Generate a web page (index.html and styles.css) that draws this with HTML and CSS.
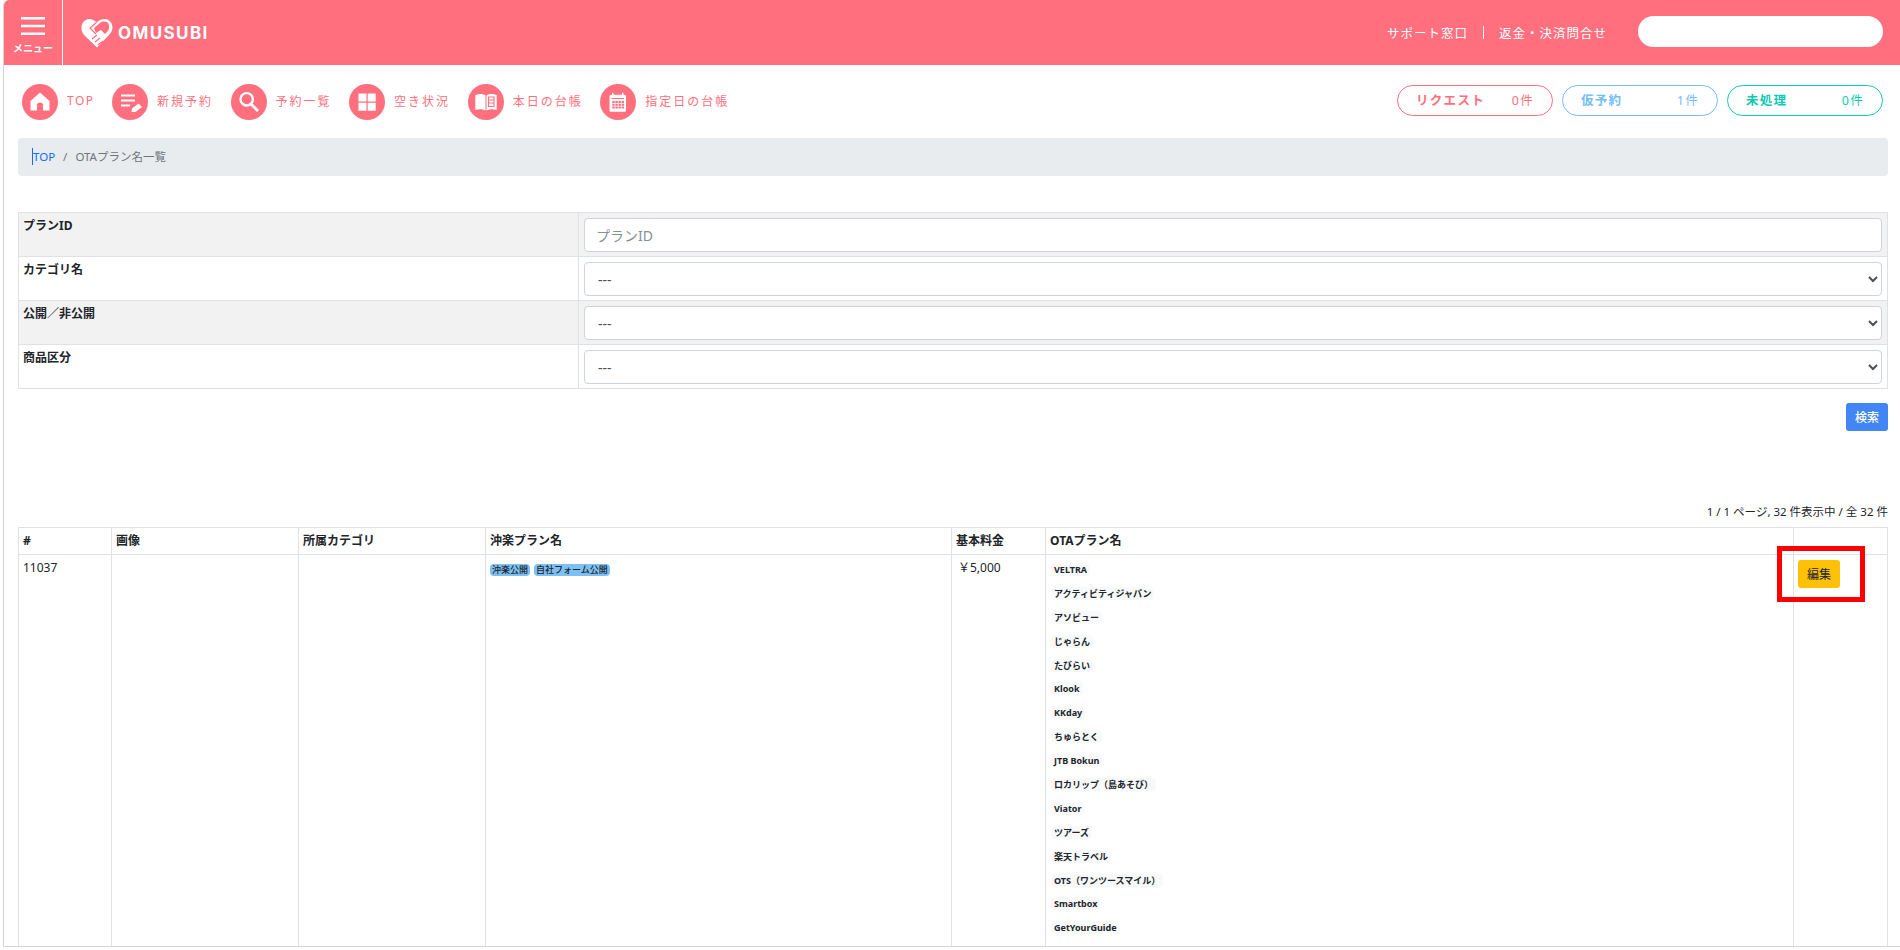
FILE: index.html
```html
<!DOCTYPE html>
<html lang="ja">
<head>
    <meta charset="UTF-8">
    <title>OTAプラン名一覧</title>
    <link rel="stylesheet" href="styles.css">
</head>
<body>
    <div class="page">
        <header class="topbar">
            <div class="menu-btn">
                <svg class="menu-icon" viewBox="0 0 24 18"><path d="M0 1.2h24M0 9h24M0 16.8h24" stroke="#fff" stroke-width="2.4"/></svg>
                <span>メニュー</span>
            </div>
            <div class="logo">
                <svg class="logo-mark" viewBox="0 0 32 30">
                    <path fill="#fff" d="M16 29.500 3 17C-1 12 0 5 4 2.500 8 0 12 1 15.500 4.500 19 1 24 0 27.500 2 32 5 33 11 29 16z"/>
                    <path fill="#ff6f7d" d="M13 10 19 5c3-2 7-2 8.500 1 1.500 3 .5 6-1.500 8l-2 2-4-4-5 3z"/>
                    <path fill="none" stroke="#ff6f7d" stroke-width="1.200" d="M15.500 4.500 9 10l6 6M11 21l5-4m-2 7 5-4m-2 7 5-4"/>
                </svg>
                <span>OMUSUBI</span>
            </div>
            <nav class="top-links">
                <a>サポート窓口</a>
                <i></i>
                <a>返金・決済問合せ</a>
            </nav>
            <div class="top-search"></div>
        </header>

        <div class="subnav">
            <ul class="shortcuts">
                <li class="short-top">
                    <span class="round"><svg viewBox="0 0 36 36"><path fill="#fff" d="M18 8.500 8.500 17v9.500H15v-5.500q0-2.500 3-2.500t3 2.500v5.500h6.500V17z"/></svg></span>TOP
                </li>
                <li>
                    <span class="round"><svg viewBox="0 0 36 36"><path stroke="#fff" stroke-width="2.200" d="M9 11.500h14M9 16.500h14M9 21.500h9"/><path fill="#fff" d="m19.500 28 .5-3.500 6.500-5 3.500 3.500-6.500 5z"/></svg></span>新規予約
                </li>
                <li>
                    <span class="round"><svg viewBox="0 0 36 36"><circle cx="15.700" cy="15.300" r="6.200" fill="none" stroke="#fff" stroke-width="2.400"/><path stroke="#fff" stroke-width="2.800" d="m20 20 7 7"/></svg></span>予約一覧
                </li>
                <li>
                    <span class="round"><svg viewBox="0 0 36 36"><path fill="#fff" d="M9.500 9.500h8v8h-8zM18.700 9.500h8v8h-8zM9.500 18.700h8v8h-8zM18.700 18.700h8v8h-8z"/></svg></span>空き状況
                </li>
                <li>
                    <span class="round"><svg viewBox="0 0 36 36"><path fill="#fff" d="M7.300 11c4-1.500 8-1.500 10.200.5v15c-3-1.500-6-1.500-10.200-.5zM18.500 11.500c2.200-2 6.200-2 10.200-.5v15c-4.200-1-7.200-1-10.200.5z"/><path fill="none" stroke="#ff6f7d" stroke-width="1.100" d="M20.500 13h5.500v9.500h-5.500zM20.500 16h5.500M20.500 19h5.500"/></svg></span>本日の台帳
                </li>
                <li>
                    <span class="round"><svg viewBox="0 0 36 36"><path fill="#fff" d="M12 8.700h1.500v2H22v-2h1.500v2h1a1.500 1.500 0 0 1 1.500 1.500v14a1.500 1.500 0 0 1-1.500 1.500h-14A1.500 1.500 0 0 1 9.500 26.200v-14a1.500 1.500 0 0 1 1.500-1.500h1z"/><path fill="#ff6f7d" d="M11.500 14h12.500v1h-12.500zM12.300 17h2.400v2h-2.400zM15.400 17h2.400v2h-2.400zM18.500 17h2.400v2h-2.400zM21.600 17h2.400v2h-2.400zM12.300 19.700h2.400v2h-2.400zM15.400 19.700h2.400v2h-2.400zM18.500 19.700h2.400v2h-2.400zM21.600 19.700h2.400v2h-2.400zM12.300 22.400h2.400v2h-2.400zM15.400 22.400h2.400v2h-2.400zM18.500 22.400h2.400v2h-2.400zM21.600 22.400h2.400v2h-2.400z"/></svg></span>指定日の台帳
                </li>
            </ul>
            <div class="counters">
                <div class="counter counter-red"><b>リクエスト</b><span>0件</span></div>
                <div class="counter counter-blue"><b>仮予約</b><span>1件</span></div>
                <div class="counter counter-green"><b>未処理</b><span>0件</span></div>
            </div>
        </div>

        <div class="breadcrumb"><a>TOP</a><em>/</em><span>OTAプラン名一覧</span></div>

        <table class="search-table">
            <tr class="shade">
                <th>プランID</th>
                <td><input class="field" type="text" placeholder="プランID"></td>
            </tr>
            <tr>
                <th>カテゴリ名</th>
                <td><select class="field"><option>---</option></select></td>
            </tr>
            <tr class="shade">
                <th>公開／非公開</th>
                <td><select class="field"><option>---</option></select></td>
            </tr>
            <tr>
                <th>商品区分</th>
                <td><select class="field"><option>---</option></select></td>
            </tr>
        </table>

        <div class="search-row"><button class="btn-search">検索</button></div>

        <p class="paging">1 / 1 ページ, 32 件表示中 / 全 32 件</p>

        <table class="list-table">
            <thead>
                <tr>
                    <th class="col-id">#</th>
                    <th class="col-img">画像</th>
                    <th class="col-cat">所属カテゴリ</th>
                    <th class="col-plan">沖楽プラン名</th>
                    <th class="col-price">基本料金</th>
                    <th class="col-ota">OTAプラン名</th>
                    <th></th>
                </tr>
            </thead>
            <tbody>
                <tr>
                    <td>11037</td>
                    <td></td>
                    <td></td>
                    <td><span class="tag">沖楽公開</span><span class="tag">自社フォーム公開</span></td>
                    <td class="price">￥5,000</td>
                    <td>
                        <ul class="ota-list">
                            <li><span>VELTRA</span></li>
                            <li><span>アクティビティジャパン</span></li>
                            <li><span>アソビュー</span></li>
                            <li><span>じゃらん</span></li>
                            <li><span>たびらい</span></li>
                            <li><span>Klook</span></li>
                            <li><span>KKday</span></li>
                            <li><span>ちゅらとく</span></li>
                            <li><span>JTB Bokun</span></li>
                            <li><span>ロカリップ（島あそび）</span></li>
                            <li><span>Viator</span></li>
                            <li><span>ツアーズ</span></li>
                            <li><span>楽天トラベル</span></li>
                            <li><span>OTS（ワンツースマイル）</span></li>
                            <li><span>Smartbox</span></li>
                            <li><span>GetYourGuide</span></li>
                        </ul>
                    </td>
                    <td class="edit-cell"><button class="btn-edit">編集</button></td>
                </tr>
            </tbody>
        </table>
    </div>
    <!-- 赤枠の注釈 -->
    <div class="red-mark"></div>
</body>
</html>
```

FILE: styles.css
```css
/* 全体 */
html, body {
    margin: 0;
    padding: 0;
    height: 100%;
    overflow: hidden;
    background: #fff;
    font-family: "Noto Sans", "Noto Sans CJK JP", sans-serif;
    color: #212529;
}

.page {
    box-sizing: border-box;
    height: 947px;
    margin-left: 3px;
    border-left: 1px solid #d5d5d5;
    border-bottom: 1px solid #d5d5d5;
    border-top-left-radius: 6px;
    overflow: hidden;
}

.red-mark {
    position: absolute;
    left: 1777px;
    top: 546px;
    box-sizing: border-box;
    width: 88px;
    height: 56px;
    border: 5px solid #f00;
}

/* ヘッダー */
.topbar {
    display: flex;
    align-items: center;
    height: 65px;
    background: #ff6f7d;
    color: #fff;
}

.menu-btn {
    box-sizing: border-box;
    width: 59px;
    height: 65px;
    border-right: 1px solid #fff;
    display: flex;
    flex-direction: column;
    align-items: center;
    padding-top: 17px;
    font-size: 10px;
    font-weight: 700;
    line-height: 14px;
}

.menu-icon {
    width: 24px;
    height: 18px;
    margin-bottom: 6px;
}

.logo {
    display: flex;
    align-items: center;
    margin-left: 18px;
    font-family: "Inter", "Liberation Sans", sans-serif;
    font-size: 17px;
    font-weight: 700;
    letter-spacing: 1.4px;
}

.logo-mark {
    width: 32px;
    height: 30px;
    margin-right: 5px;
}

.top-links {
    display: flex;
    align-items: center;
    margin-left: auto;
    font-size: 12.5px;
    letter-spacing: 1px;
}

.top-links i {
    width: 1px;
    height: 13px;
    margin: 0 15px;
    background: #fff;
}

.top-search {
    width: 245px;
    height: 31px;
    margin: 0 17px 2px 31px;
    border-radius: 16px;
    background: #fff;
}

/* ショートカット */
.subnav {
    display: flex;
    justify-content: space-between;
    align-items: center;
    height: 73px;
    padding: 0 17px 0 18px;
}

.shortcuts {
    display: flex;
    margin: 0 0 2px;
    padding: 0;
    list-style: none;
    font-size: 12px;
    letter-spacing: 2px;
    color: #ff6f7d;
}

.shortcuts li {
    display: flex;
    align-items: center;
    margin-right: 17.5px;
}

.shortcuts .short-top {
    letter-spacing: 1.5px;
}

.round {
    width: 36px;
    height: 36px;
    margin: 2px 9px 0 0;
    border-radius: 50%;
    background: #ff6f7d;
}

.round svg {
    display: block;
    width: 36px;
    height: 36px;
}

.counters {
    display: flex;
    gap: 9px;
    margin-bottom: 2px;
}

.counter {
    box-sizing: border-box;
    display: flex;
    justify-content: space-between;
    align-items: center;
    width: 156px;
    height: 31px;
    padding: 0 18px 2px;
    border: 1px solid;
    border-radius: 16px;
    font-size: 12.5px;
    letter-spacing: 1.3px;
}

.counter b { font-weight: 700; }

.counter-red { color: #ff6f7d; }
.counter-blue { color: #76bdf7; }
.counter-green { color: #0fc9b4; }

/* パンくず */
.breadcrumb {
    box-sizing: border-box;
    display: flex;
    align-items: center;
    width: 1870px;
    height: 38px;
    margin-left: 14px;
    padding: 0 0 2px 14px;
    border-radius: 4px;
    background: #e9ecef;
    font-size: 11.5px;
    color: #6c757d;
}

.breadcrumb a {
    border-left: 1px solid #0d6efd;
    color: #0d6efd;
    line-height: 17px;
}

.breadcrumb em {
    margin: 0 8px 0 8px;
    font-style: normal;
}

/* 検索フォーム */
.search-table {
    width: 1870px;
    margin: 36px 0 0 14px;
    border-collapse: collapse;
    table-layout: fixed;
    font-size: 12px;
}

.search-table th, .search-table td {
    box-sizing: border-box;
    height: 44px;
    padding: 3px 5px;
    border: 1px solid #dee2e6;
    vertical-align: top;
    text-align: left;
}

.search-table th {
    width: 560px;
    padding: 5px 4px 3px;
    font-weight: 700;
    line-height: 16px;
}

.shade th, .shade td {
    background: #f2f2f2;
}

.field {
    box-sizing: border-box;
    display: block;
    width: 100%;
    height: 34px;
    margin-top: 2px;
    padding: 0 11px;
    border: 1px solid #ced4da;
    border-radius: 4px;
    background-color: #fff;
    font-family: inherit;
    font-size: 14px;
    color: #495057;
}

select.field {
    padding-left: 9px;
}

.field::placeholder {
    color: #868e96;
}

.search-row {
    display: flex;
    justify-content: flex-end;
    width: 1870px;
    margin: 14px 0 0 14px;
}

.btn-search {
    width: 42px;
    height: 28px;
    padding: 0;
    border: none;
    border-radius: 3px;
    background: #4285f4;
    color: #fff;
    font-family: inherit;
    font-size: 12px;
    font-weight: 500;
}

.paging {
    width: 1870px;
    margin: 72px 0 0 14px;
    text-align: right;
    font-size: 11.5px;
    line-height: 18px;
}

/* 一覧 */
.list-table {
    width: 1870px;
    margin: 6px 0 0 14px;
    border-collapse: collapse;
    table-layout: fixed;
    font-size: 12px;
}

.list-table th, .list-table td {
    box-sizing: border-box;
    padding: 4px;
    border: 1px solid #dee2e6;
    vertical-align: top;
    text-align: left;
}

.list-table th {
    height: 27px;
    line-height: 18px;
    font-weight: 700;
}

.list-table td {
    line-height: 18px;
}

.col-id { width: 93px; }
.col-img { width: 187px; }
.col-cat { width: 187px; }
.col-plan { width: 466px; }
.col-price { width: 94px; }
.col-ota { width: 748px; }

.list-table .price {
    padding-left: 6px;
}

.tag {
    display: inline-block;
    margin: 5px 4px 0 0;
    padding: 0 2px;
    border-radius: 4px;
    background: #7cc0f5;
    font-size: 9px;
    font-weight: 500;
    line-height: 12px;
    vertical-align: top;
}

.ota-list {
    margin: 4px 0 0;
    padding: 0;
    list-style: none;
}

.ota-list li {
    height: 23.9px;
    font-size: 9px;
    font-weight: 700;
    line-height: 13px;
}

.ota-list span {
    display: inline-block;
    margin-left: 1px;
    padding: 0 3px;
    border-radius: 4px;
    background: #f8f9fa;
}

.list-table .edit-cell {
    padding-top: 5px;
}

.btn-edit {
    display: block;
    width: 42px;
    height: 28px;
    padding: 0;
    border: none;
    border-radius: 3px;
    background: #ffc107;
    color: #212529;
    font-family: inherit;
    font-size: 12px;
}
```
